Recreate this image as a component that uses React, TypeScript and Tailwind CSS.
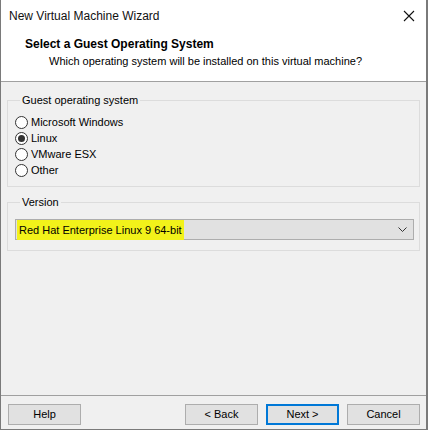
import React from 'react';

const options = ['Microsoft Windows', 'Linux', 'VMware ESX', 'Other'];

const Radio: React.FC<{ label: string; checked?: boolean }> = ({ label, checked }) => (
  <div className="flex items-center h-4">
    <span className="w-[13px] h-[13px] rounded-full border border-[#333] bg-white flex items-center justify-center">
      {checked && <span className="w-[7px] h-[7px] rounded-full bg-[#333]" />}
    </span>
    <span className="ml-[3px]">{label}</span>
  </div>
);

const Button: React.FC<{ label: string; primary?: boolean }> = ({ label, primary }) => (
  <button
    className={
      primary
        ? 'w-[73px] h-[21px] bg-[#e1e1e1] border-2 border-[#0078d7] text-[#000]'
        : 'w-[73px] h-[21px] bg-[#e1e1e1] border border-[#adadad] text-[#000]'
    }
  >
    {label}
  </button>
);

export default function App() {
  return (
    <div
      className="w-[428px] h-[430px] flex flex-col bg-[#f0f0f0] border-l border-r-2 border-b border-[#7a7a7a] text-[11px] text-black"
      style={{ fontFamily: '"Liberation Sans", Arial, sans-serif' }}
    >
      {/* header */}
      <div className="bg-white h-[82px] flex flex-col border-b border-[#a0a0a0]">
        <div className="h-[31px] flex items-center justify-between pl-[8px] pr-[8px]">
          <span className="text-[12px] text-[#111]">New Virtual Machine Wizard</span>
          <svg width="12" height="12" viewBox="0 0 12 12" className="mr-[3px]">
            <path d="M1 1 L11 11 M11 1 L1 11" stroke="#111" strokeWidth="1.1" />
          </svg>
        </div>
        <div className="pl-[24px] mt-[5px] font-bold text-[12px] leading-4">Select a Guest Operating System</div>
        <div className="pl-[48px] mt-[1px] leading-4">Which operating system will be installed on this virtual machine?</div>
      </div>

      {/* body */}
      <div className="flex-1 px-[6px] pt-[10px]">
        <fieldset className="border border-[#dcdcdc] pb-[8px] pl-[7px]">
          <legend className="ml-[5px] px-[2px] leading-4">Guest operating system</legend>
          <div className="mt-[6px] flex flex-col">
            {options.map((o) => (
              <Radio key={o} label={o} checked={o === 'Linux'} />
            ))}
          </div>
        </fieldset>

        <fieldset className="mt-[7px] border border-[#dcdcdc] pl-[7px] pr-[5px] pb-[10px]">
          <legend className="ml-[5px] px-[2px] leading-4">Version</legend>
          <div className="mt-[9px] h-[21px] bg-[#e1e1e1] border border-[#adadad] flex items-center justify-between pl-[1px] pr-[6px]">
            <span className="bg-[#f2f21a] px-[2px] leading-[20px]">Red Hat Enterprise Linux 9 64-bit</span>
            <svg width="9" height="6" viewBox="0 0 9 6">
              <path d="M0.5 0.5 L4.5 4.5 L8.5 0.5" stroke="#333" strokeWidth="1" fill="none" />
            </svg>
          </div>
        </fieldset>
      </div>

      {/* footer */}
      <div className="border-t border-[#a0a0a0] pt-[8px] pb-[4px] pl-[7px] pr-[6px] flex items-center">
        <Button label="Help" />
        <div className="flex-1" />
        <div className="flex gap-2">
          <Button label="< Back" />
          <Button label="Next >" primary />
          <Button label="Cancel" />
        </div>
      </div>
    </div>
  );
}
